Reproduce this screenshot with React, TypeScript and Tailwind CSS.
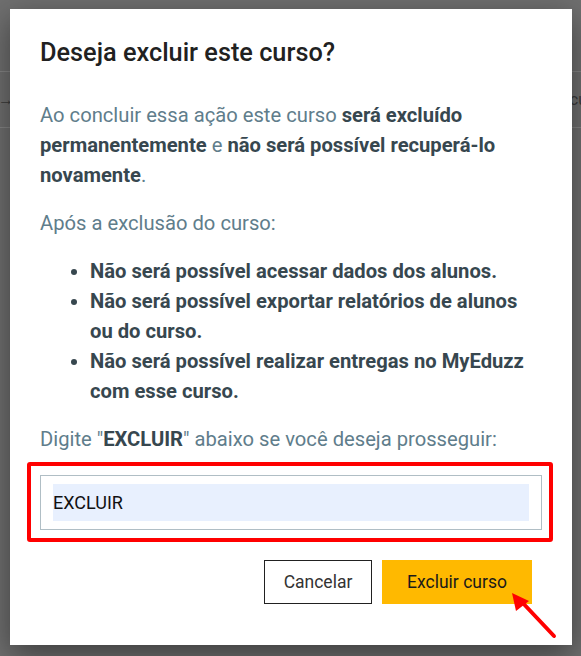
export default function App() {
  return (
    <div className="relative h-[656px] w-[581px] overflow-hidden bg-[#6f6f6f] font-['Roboto',sans-serif]">
      {/* page behind the overlay */}
      <div className="h-[71px]" />
      <div className="flex h-[57px] items-center justify-between border-y border-[#858585] text-[16px] text-[#3a3a3a]">
        <span className="-ml-[2px]">→</span>
        <span className="-mr-[6px]">cu</span>
      </div>

      {/* dialog */}
      <div className="absolute left-[10px] top-[9px] flex h-[636px] w-[562px] flex-col bg-white px-[30px] pt-[28px] shadow-[0_10px_30px_rgba(0,0,0,0.45)]">
        <h2 className="text-[25.3px] font-medium leading-[32px] text-[#212121]">Deseja excluir este curso?</h2>

        <p className="mt-[31px] text-[20.2px] leading-[30px] text-[#607d8b]">
          Ao concluir essa ação este curso <b className="font-bold text-[#37474f]">será excluído permanentemente</b> e{" "}
          <b className="font-bold text-[#37474f]">não será possível recuperá-lo novamente</b>.
        </p>

        <p className="mt-[18px] text-[20.2px] leading-[30px] text-[#607d8b]">Após a exclusão do curso:</p>

        <ul className="mt-[18px] list-disc pl-[50px] pr-[10px] text-[20.2px] font-bold leading-[30px] text-[#37474f]">
          <li>Não será possível acessar dados dos alunos.</li>
          <li>Não será possível exportar relatórios de alunos ou do curso.</li>
          <li>Não será possível realizar entregas no MyEduzz com esse curso.</li>
        </ul>

        <p className="mt-[18px] text-[20.2px] leading-[30px] text-[#607d8b]">
          Digite "<b className="font-bold text-[#37474f]">EXCLUIR</b>" abaixo se você deseja prosseguir:
        </p>

        <div className="relative mt-[21px]">
          <div className="border border-[#b0bec5] px-[12px] py-[8px]">
            <div className="flex h-[37px] items-center bg-[#e8f0fe] text-[18px] text-[#111]">EXCLUIR</div>
          </div>
          <div className="pointer-events-none absolute -bottom-[12px] -left-[13px] -right-[11px] -top-[13px] rounded-[3px] border-[4px] border-[#ff0000]" />
        </div>

        <div className="mt-[30px] flex justify-end gap-[10px] pr-[10px]">
          <button className="h-[44px] w-[108px] border border-[#212121] bg-white text-[17.5px] text-[#333]">Cancelar</button>
          <button className="h-[44px] w-[150px] bg-[#ffb900] text-[17.5px] text-[#1a1a1a]">Excluir curso</button>
        </div>
      </div>

      {/* annotation arrow */}
      <svg className="absolute left-0 top-0" width="581" height="656" viewBox="0 0 581 656">
        <line x1="554" y1="636" x2="520" y2="600" stroke="#ff0000" strokeWidth="4" strokeLinecap="round" />
        <polygon points="512,593 529,601 516,611" fill="#ff0000" />
      </svg>
    </div>
  );
}
